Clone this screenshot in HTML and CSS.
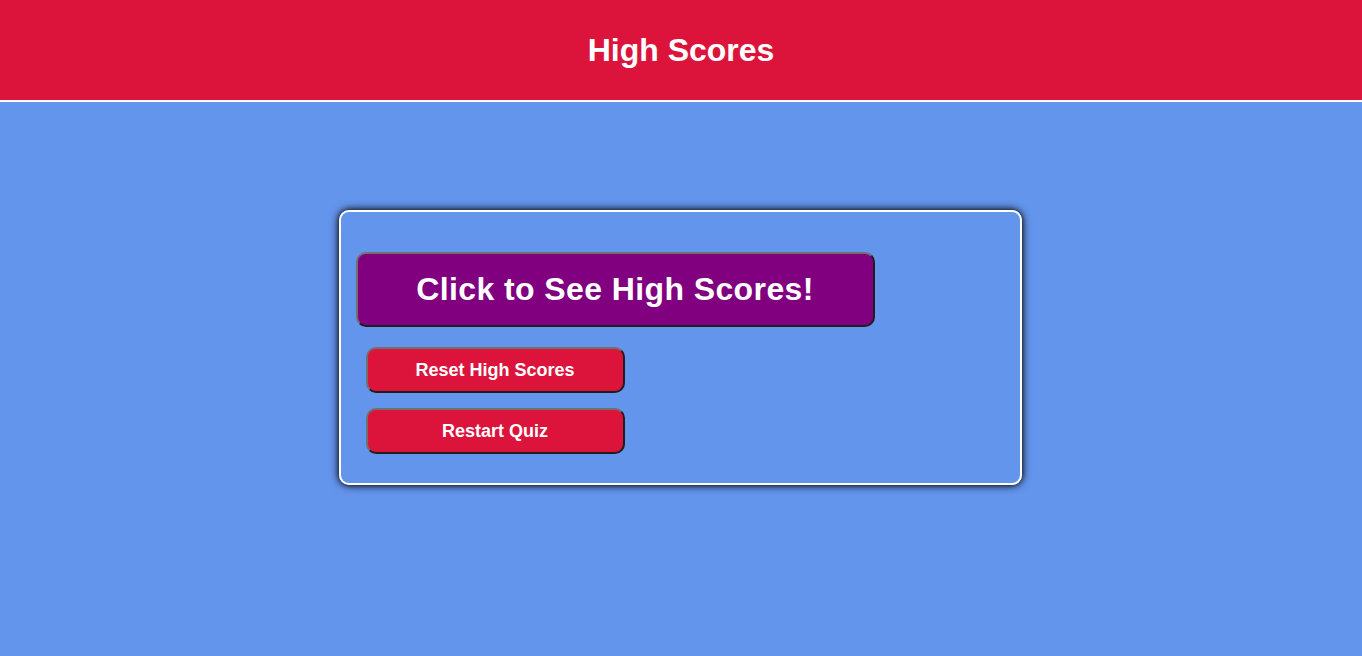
FILE: index.html
```html
<!DOCTYPE html>
<html lang="en">
<head>
<meta charset="utf-8">
<title>High Scores</title>
<link rel="stylesheet" href="styles.css">
</head>
<body>
<header class="top-bar">
  <h1 class="title">High Scores</h1>
</header>
<main class="page">
  <section class="card">
    <button class="btn-main" type="button">Click to See High Scores!</button>
    <div class="actions">
      <button class="btn-small" type="button">Reset High Scores</button>
      <button class="btn-small" type="button">Restart Quiz</button>
    </div>
  </section>
</main>
</body>
</html>
```

FILE: styles.css
```css
* { box-sizing: border-box; }

html, body {
  margin: 0;
  padding: 0;
  height: 100%;
}

body {
  background: #6495ED;
  font-family: "Liberation Sans", Arial, sans-serif;
  color: #fff;
}

.top-bar {
  height: 102px;
  background: #DC143C;
  border-bottom: 2px solid #fff;
  display: flex;
  align-items: center;
  justify-content: center;
}

.title {
  margin: 0;
  font-size: 32px;
  font-weight: bold;
  line-height: 1;
}

.page {
  display: flex;
  justify-content: center;
  padding-top: 108px;
  padding-right: 2px;
}

.card {
  width: 683px;
  border: 2px solid #fff;
  border-radius: 10px;
  box-shadow: 0 0 10px #000, 0 0 4px rgba(0, 0, 0, 0.5);
  padding: 40px 15px 29px;
  display: flex;
  flex-direction: column;
  align-items: flex-start;
}

.btn-main {
  width: 519px;
  height: 75px;
  background: #800080;
  color: #fff;
  font-family: "Liberation Sans", Arial, sans-serif;
  font-weight: bold;
  font-size: 32px;
  letter-spacing: 0.4px;
  border: 2px solid;
  border-color: #707070 #1e1e1e #1e1e1e #707070;
  border-radius: 10px;
  padding: 0;
  margin-bottom: 20px;
}

.actions {
  display: flex;
  flex-direction: column;
  gap: 15px;
  padding-left: 10px;
}

.btn-small {
  width: 259px;
  height: 46px;
  background: #DC143C;
  color: #fff;
  font-family: "Liberation Sans", Arial, sans-serif;
  font-weight: bold;
  font-size: 18px;
  border: 2px solid;
  border-color: #707070 #1e1e1e #1e1e1e #707070;
  border-radius: 10px;
  padding: 0;
}
```
